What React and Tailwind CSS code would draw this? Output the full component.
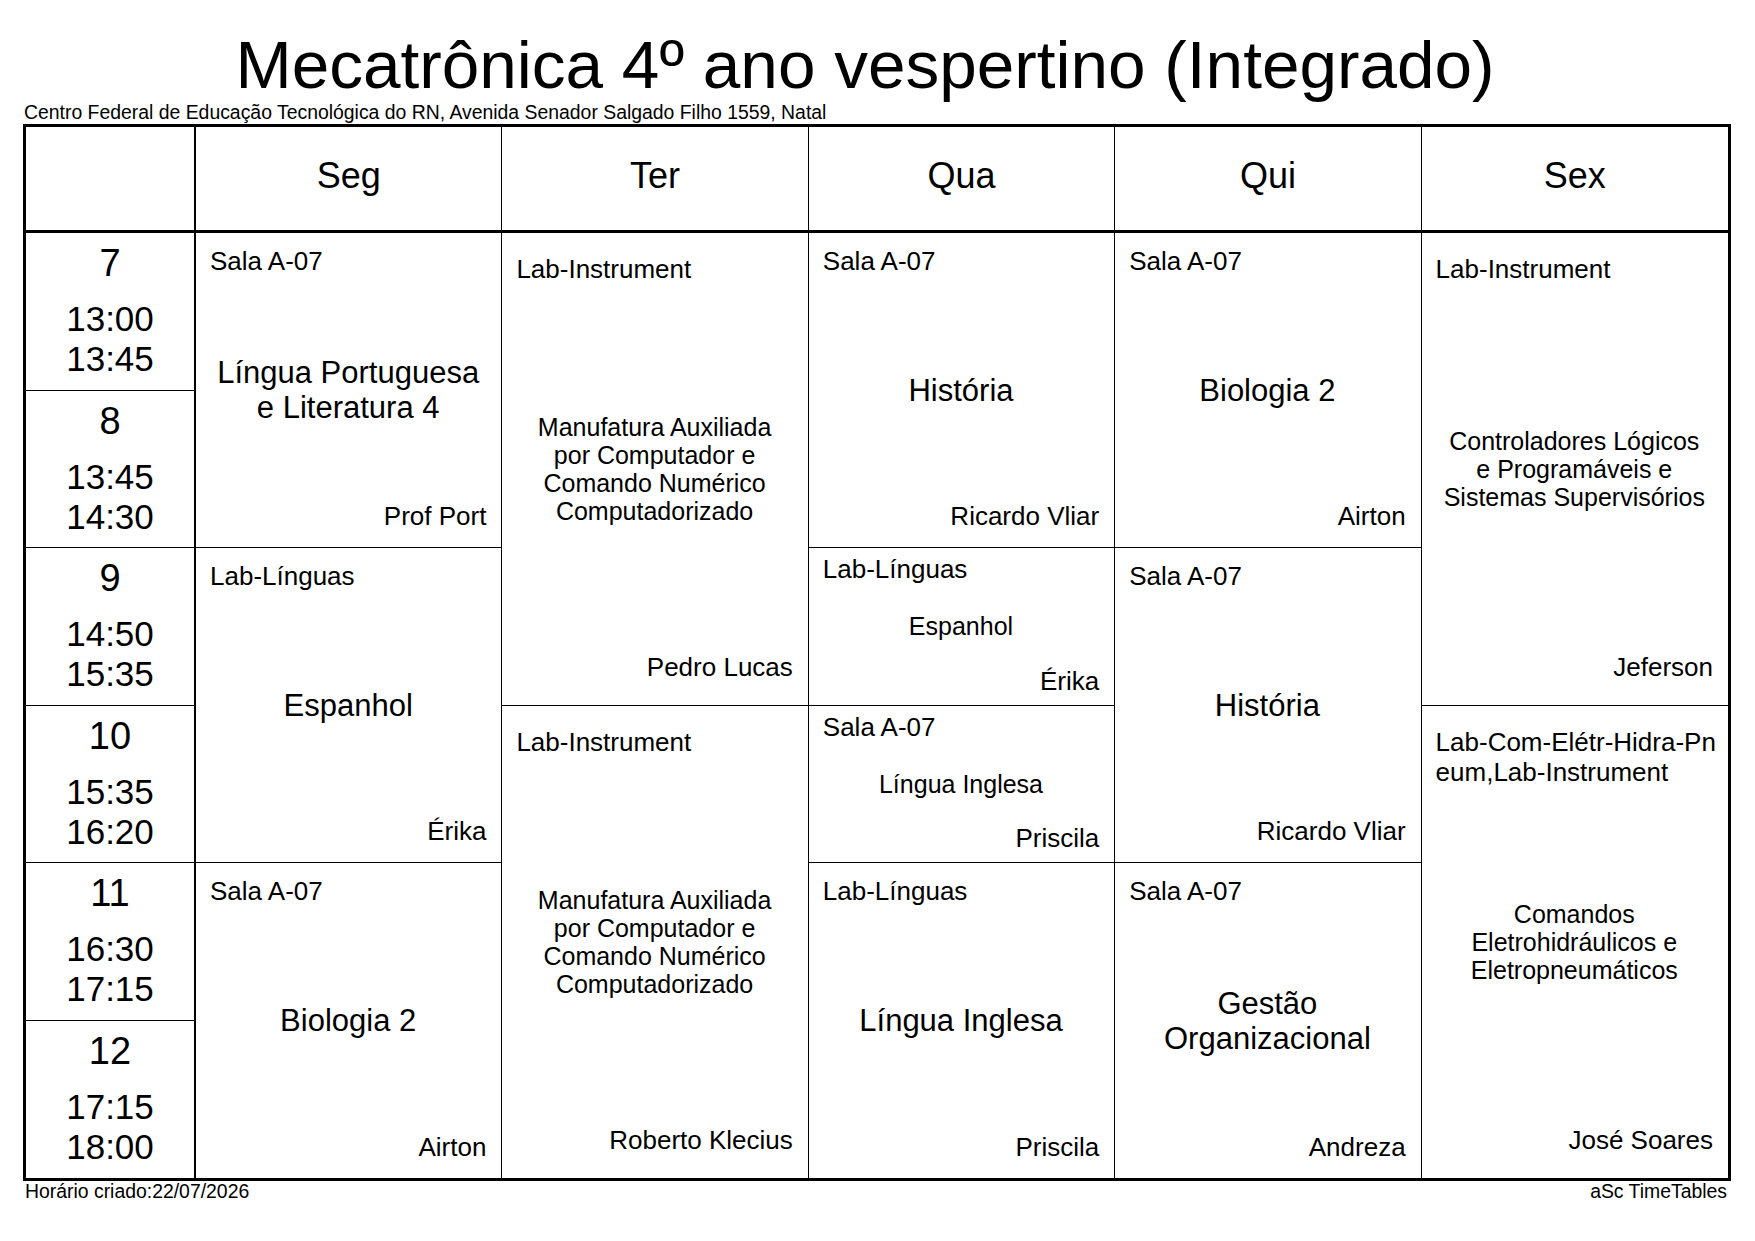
import React from "react";

const times = [
  { n: "7", a: "13:00", b: "13:45", row: "row-start-2" },
  { n: "8", a: "13:45", b: "14:30", row: "row-start-3" },
  { n: "9", a: "14:50", b: "15:35", row: "row-start-4" },
  { n: "10", a: "15:35", b: "16:20", row: "row-start-5" },
  { n: "11", a: "16:30", b: "17:15", row: "row-start-6" },
  { n: "12", a: "17:15", b: "18:00", row: "row-start-7" },
];

const days = [
  { d: "Seg", cls: "col-start-2 border-r" },
  { d: "Ter", cls: "col-start-3 border-r" },
  { d: "Qua", cls: "col-start-4 border-r" },
  { d: "Qui", cls: "col-start-5 border-r" },
  { d: "Sex", cls: "col-start-6" },
];

const roomMt = { 1: "mt-[6px]", 2: "mt-[13px]", 3: "mt-[21px]" };
const teachMb = { 1: "mb-[9px]", 2: "mb-[16px]", 3: "mb-[23px]" };

const cells = [
  // Seg
  { cls: "col-start-2 row-start-2 row-span-2 border-r border-b", n: 2, room: ["Sala A-07"], subj: ["Língua Portuguesa", "e Literatura 4"], big: true, t: "Prof Port" },
  { cls: "col-start-2 row-start-4 row-span-2 border-r border-b", n: 2, room: ["Lab-Línguas"], subj: ["Espanhol"], big: true, t: "Érika" },
  { cls: "col-start-2 row-start-6 row-span-2 border-r", n: 2, room: ["Sala A-07"], subj: ["Biologia 2"], big: true, t: "Airton" },
  // Ter
  { cls: "col-start-3 row-start-2 row-span-3 border-r border-b", n: 3, room: ["Lab-Instrument"], subj: ["Manufatura Auxiliada", "por Computador e", "Comando Numérico", "Computadorizado"], big: false, t: "Pedro Lucas" },
  { cls: "col-start-3 row-start-5 row-span-3 border-r", n: 3, room: ["Lab-Instrument"], subj: ["Manufatura Auxiliada", "por Computador e", "Comando Numérico", "Computadorizado"], big: false, t: "Roberto Klecius" },
  // Qua
  { cls: "col-start-4 row-start-2 row-span-2 border-r border-b", n: 2, room: ["Sala A-07"], subj: ["História"], big: true, t: "Ricardo Vliar" },
  { cls: "col-start-4 row-start-4 row-span-1 border-r border-b", n: 1, room: ["Lab-Línguas"], subj: ["Espanhol"], big: false, t: "Érika" },
  { cls: "col-start-4 row-start-5 row-span-1 border-r border-b", n: 1, room: ["Sala A-07"], subj: ["Língua Inglesa"], big: false, t: "Priscila" },
  { cls: "col-start-4 row-start-6 row-span-2 border-r", n: 2, room: ["Lab-Línguas"], subj: ["Língua Inglesa"], big: true, t: "Priscila" },
  // Qui
  { cls: "col-start-5 row-start-2 row-span-2 border-r border-b", n: 2, room: ["Sala A-07"], subj: ["Biologia 2"], big: true, t: "Airton" },
  { cls: "col-start-5 row-start-4 row-span-2 border-r border-b", n: 2, room: ["Sala A-07"], subj: ["História"], big: true, t: "Ricardo Vliar" },
  { cls: "col-start-5 row-start-6 row-span-2 border-r", n: 2, room: ["Sala A-07"], subj: ["Gestão", "Organizacional"], big: true, t: "Andreza" },
  // Sex
  { cls: "col-start-6 row-start-2 row-span-3 border-b", n: 3, room: ["Lab-Instrument"], subj: ["Controladores Lógicos", "e Programáveis e", "Sistemas Supervisórios"], big: false, t: "Jeferson" },
  { cls: "col-start-6 row-start-5 row-span-3", n: 3, room: ["Lab-Com-Elétr-Hidra-Pn", "eum,Lab-Instrument"], subj: ["Comandos", "Eletrohidráulicos e", "Eletropneumáticos"], big: false, t: "José Soares" },
];

function Lesson({ c }) {
  return (
    <div className={`${c.cls} border-black grid grid-cols-1 grid-rows-1 min-h-0 min-w-0 pl-[14px] pr-[15px]`}>
      <div className={`col-start-1 row-start-1 self-start justify-self-start text-[26px] leading-[30px] whitespace-nowrap ${roomMt[c.n]}`}>
        {c.room.map((r, i) => (
          <div key={i}>{r}</div>
        ))}
      </div>
      <div
        className={`col-start-1 row-start-1 self-center justify-self-center text-center whitespace-nowrap ${
          c.big ? "text-[31px] leading-[35px]" : "text-[25px] leading-[28px]"
        }`}
      >
        {c.subj.map((s, i) => (
          <div key={i}>{s}</div>
        ))}
      </div>
      <div className={`col-start-1 row-start-1 self-end justify-self-end text-[26px] leading-[30px] whitespace-nowrap ${teachMb[c.n]}`}>
        {c.t}
      </div>
    </div>
  );
}

export default function App() {
  return (
    <div className="w-[1755px] h-[1241px] bg-white text-black [font-family:Liberation_Sans,Arimo,Arial,sans-serif] pt-[31px] overflow-hidden">
      <div className="pr-[25px] text-center text-[67.5px] leading-[67px] whitespace-nowrap">
        Mecatrônica 4º ano vespertino (Integrado)
      </div>
      <div className="ml-[24px] mt-[4px] text-[19.4px] leading-[20px] whitespace-nowrap">
        Centro Federal de Educação Tecnológica do RN, Avenida Senador Salgado Filho 1559, Natal
      </div>
      <div className="ml-[23px] mt-[2px] w-[1708px] h-[1057px] border-[3px] border-black grid grid-cols-[170px_repeat(5,minmax(0,1fr))] grid-rows-[106px_repeat(6,minmax(0,1fr))]">
        <div className="col-start-1 row-start-1 border-r-2 border-b-[3px] border-black" />
        {days.map((d) => (
          <div
            key={d.d}
            className={`${d.cls} row-start-1 border-b-[3px] border-black flex items-center justify-center pb-[6px] text-[36px] leading-[40px]`}
          >
            {d.d}
          </div>
        ))}
        {times.map((t, i) => (
          <div
            key={t.n}
            className={`col-start-1 ${t.row} border-r-2 border-black ${i < 5 ? "border-b" : ""} flex flex-col items-center pt-[10px] min-h-0`}
          >
            <div className="text-[38px] leading-[40px]">{t.n}</div>
            <div className="mt-[16px] text-[35px] leading-[40px]">{t.a}</div>
            <div className="text-[35px] leading-[40px]">{t.b}</div>
          </div>
        ))}
        {cells.map((c, i) => (
          <Lesson key={i} c={c} />
        ))}
      </div>
      <div className="ml-[23px] w-[1708px] flex justify-between pl-[2px] pr-[4px] text-[19.4px] leading-[20px] whitespace-nowrap">
        <span>Horário criado:22/07/2026</span>
        <span>aSc TimeTables</span>
      </div>
    </div>
  );
}
